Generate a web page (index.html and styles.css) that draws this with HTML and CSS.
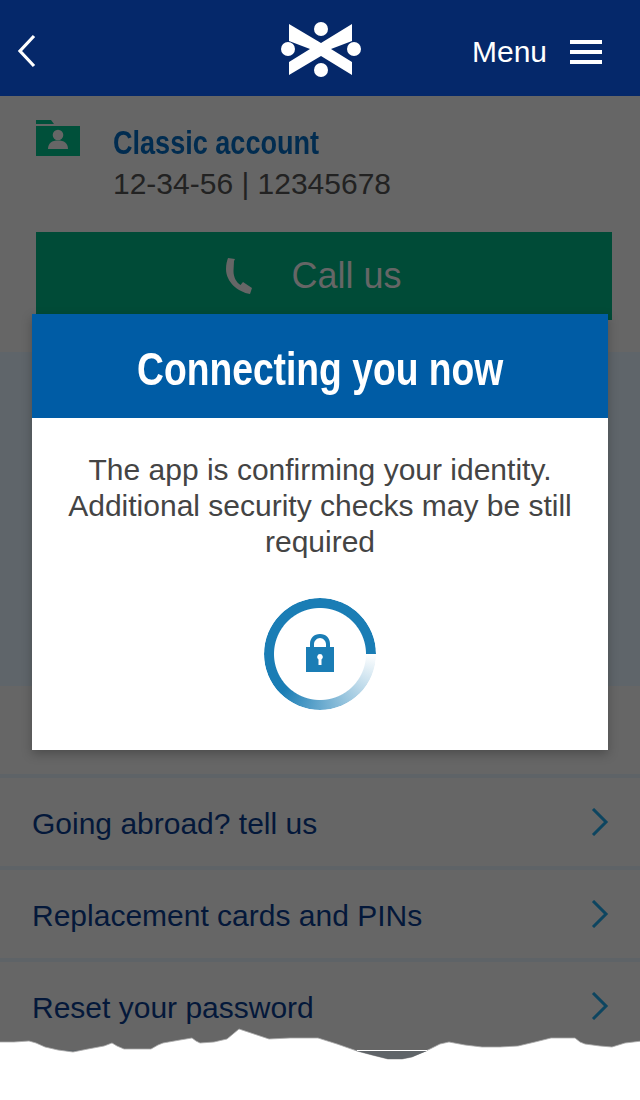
FILE: index.html
```html
<!DOCTYPE html>
<html lang="en">
<head>
    <meta charset="UTF-8">
    <meta name="viewport" content="width=device-width, initial-scale=1.0">
    <title>Connecting you now</title>
    <link rel="stylesheet" href="styles.css">
</head>
<body>
    <div class="page">
        <header class="topbar">
            <svg class="back" width="24" height="36" viewBox="0 0 24 36"><path d="M20 3 6 18l14 15" fill="none" stroke="#fff" stroke-width="3.2"/></svg>
            <svg class="logo" width="80" height="55" viewBox="281 22 80 55" fill="#fff">
                <polygon points="289,24 321,43 352,24 352,41 331,49 352,62 352,75 321,56 289,75 289,62 310,49 289,41"/>
                <circle cx="321" cy="29" r="7"/>
                <circle cx="288" cy="49" r="7"/>
                <circle cx="354" cy="49" r="7"/>
                <circle cx="321" cy="70" r="7"/>
            </svg>
            <div class="menu">
                <span>Menu</span>
                <div class="burger"><i></i><i></i><i></i></div>
            </div>
        </header>

        <section class="account">
            <div class="account-info">
                <svg class="folder" width="44" height="36" viewBox="0 0 44 36">
                    <path d="M0 0h15l3 4H0z" fill="#00503a"/>
                    <rect y="6" width="44" height="30" fill="#00503a"/>
                    <circle cx="22" cy="15" r="5.300" fill="#666"/>
                    <path d="M12 29c0-6 4-8.500 10-8.500s10 2.500 10 8.500z" fill="#666"/>
                </svg>
                <div>
                    <h3 class="account-name"><span>Classic account</span></h3>
                    <p class="account-no">12-34-56 | 12345678</p>
                </div>
            </div>
            <div class="call-btn">
                <svg width="28" height="36" viewBox="0 0 28 36"><path d="M2 0 9 1 8 3 7.500 13C7.500 19 10 24 14.500 27L17 24 26 30 24 36C12 34 0 24 0 11 0 6 1 3 2 0z" fill="#666"/></svg>
                <span>Call us</span>
            </div>
        </section>

        <section class="band"></section>

        <ul class="links">
            <li></li>
            <li><span>Going abroad? tell us</span> <svg width="18" height="28" viewBox="0 0 18 28"><path d="M2 1l13 13L2 27" fill="none" stroke="#0d4560" stroke-width="3"/></svg></li>
            <li><span>Replacement cards and PINs</span> <svg width="18" height="28" viewBox="0 0 18 28"><path d="M2 1l13 13L2 27" fill="none" stroke="#0d4560" stroke-width="3"/></svg></li>
            <li><span>Reset your password</span> <svg width="18" height="28" viewBox="0 0 18 28"><path d="M2 1l13 13L2 27" fill="none" stroke="#0d4560" stroke-width="3"/></svg></li>
        </ul>

        <div class="modal">
            <h2 class="modal-title"><span>Connecting you now</span></h2>
            <div class="modal-body">
                <p>The app is confirming your identity. Additional security checks may be still required</p>
                <div class="spinner">
                    <div class="ring"></div>
                    <svg class="lock" width="30" height="40" viewBox="0 0 30 40">
                        <path d="M5 16V11C5 5 9 1 15 1s10 4 10 10v5h-4V11c0-3-3-6-6-6s-6 3-6 6v5z" fill="#1a7db5"/>
                        <path d="M1 14h28v25H1z" fill="#1a7db5"/>
                        <path d="M15 21a3 3 0 0 1 1.500 5.500V32h-3v-5.500A3 3 0 0 1 15 21z" fill="#fff"/>
                    </svg>
                </div>
            </div>
        </div>

        <svg class="tear" width="640" height="80" viewBox="0 1020 640 80">
            <path d="M-2 1042 14 1042 29 1041 36 1043 45 1047 58 1050 73 1052 88 1049 104 1046 112 1043 117 1046 124 1049 151 1049 158 1045 163 1043 180 1040 192 1038 196 1041 200 1043 214 1042 227 1039 233 1034 239 1029 254 1034 269 1039 290 1038 318 1038 337 1044 357 1051 372 1055 388 1059 402 1059 412 1057 430 1049 440 1044 449 1042 465 1045 482 1047 500 1047 518 1046 535 1042 551 1038 575 1038 580 1042 585 1044 600 1046 612 1047 625 1043 642 1041V1102H-2z" fill="#fff" stroke="#aaa" stroke-width=".8"/>
            <path d="M357 1051 372 1055 388 1059 402 1059 412 1057 427 1051z" fill="#5f6468"/>
            <path d="M357 1050.500H427" stroke="#fff" stroke-width="1"/>
        </svg>
    </div>
</body>
</html>
```

FILE: styles.css
```css
html, body {
    margin: 0;
    padding: 0;
    background: #fff;
}
.page {
    position: relative;
    width: 640px;
    height: 1100px;
    overflow: hidden;
    background: #666;
    font-family: "Liberation Sans", Arial, sans-serif;
}
.topbar {
    height: 96px;
    background: #05286a;
    display: grid;
    grid-template-columns: 1fr 80px 1fr;
    align-items: center;
    color: #fff;
}
.back {
    margin-left: 14px;
    margin-top: 5px;
}
.logo {
    margin-left: 1px;
    margin-top: 3px;
}
.menu {
    display: flex;
    justify-content: flex-end;
    align-items: center;
    gap: 23px;
    padding-right: 38px;
    font-size: 30px;
    margin-top: 7px;
}
.burger {
    display: flex;
    flex-direction: column;
    gap: 6px;
}
.burger i {
    display: block;
    width: 32px;
    height: 4px;
    background: #fff;
}
.account {
    height: 256px;
    padding: 24px 28px 0 36px;
    box-sizing: border-box;
}
.account-info {
    display: flex;
    gap: 33px;
    height: 112px;
}
.account-name {
    margin: 3px 0 0;
    font-size: 33px;
    line-height: 40px;
    font-weight: bold;
    color: #012c50;
}
.account-name span {
    display: inline-block;
    transform: scaleX(0.82);
    transform-origin: left center;
}
.account-no {
    margin: 1px 0 0;
    font-size: 30px;
    line-height: 40px;
    color: #222;
}
.call-btn {
    height: 88px;
    background: #004b37;
    display: flex;
    justify-content: center;
    align-items: center;
    gap: 37px;
    padding-right: 20px;
    font-size: 36px;
    color: #666;
}
.band {
    height: 334px;
    background: #5f656a;
}
.links {
    list-style: none;
    margin: 0;
    padding: 0;
}
.links li {
    height: 88px;
    border-bottom: 4px solid #5e6367;
    padding: 0 31px 0 32px;
    display: flex;
    justify-content: space-between;
    align-items: center;
    font-size: 30px;
    color: #04183a;
}
.links li span {
    margin-top: 4px;
}
.links li svg {
    flex: none;
}
.modal {
    position: absolute;
    left: 32px;
    top: 314px;
    width: 576px;
    height: 436px;
    background: #fff;
    box-shadow: 0 4px 10px rgba(0, 0, 0, 0.25);
}
.modal-title {
    margin: 0;
    height: 104px;
    line-height: 110px;
    background: #005ca5;
    color: #fff;
    text-align: center;
    font-size: 46px;
}
.modal-title span {
    display: inline-block;
    transform: scaleX(0.81);
}
.modal-body {
    padding: 34px 32px 0;
    text-align: center;
    color: #444;
    font-size: 30px;
    line-height: 36px;
}
.modal-body p {
    margin: 0;
}
.spinner {
    position: relative;
    width: 112px;
    height: 112px;
    margin: 38px auto 0;
    display: flex;
    align-items: center;
    justify-content: center;
}
.lock {
    margin-top: -3px;
}
.ring {
    position: absolute;
    inset: 0;
    border-radius: 50%;
    background: conic-gradient(from 90deg, #fff 0deg, #1a7db5 135deg, #1a7db5 360deg);
    -webkit-mask: radial-gradient(circle, transparent 45.500px, #000 46.500px);
    mask: radial-gradient(circle, transparent 45.500px, #000 46.500px);
}
.tear {
    position: absolute;
    left: 0;
    bottom: 0;
}
```
